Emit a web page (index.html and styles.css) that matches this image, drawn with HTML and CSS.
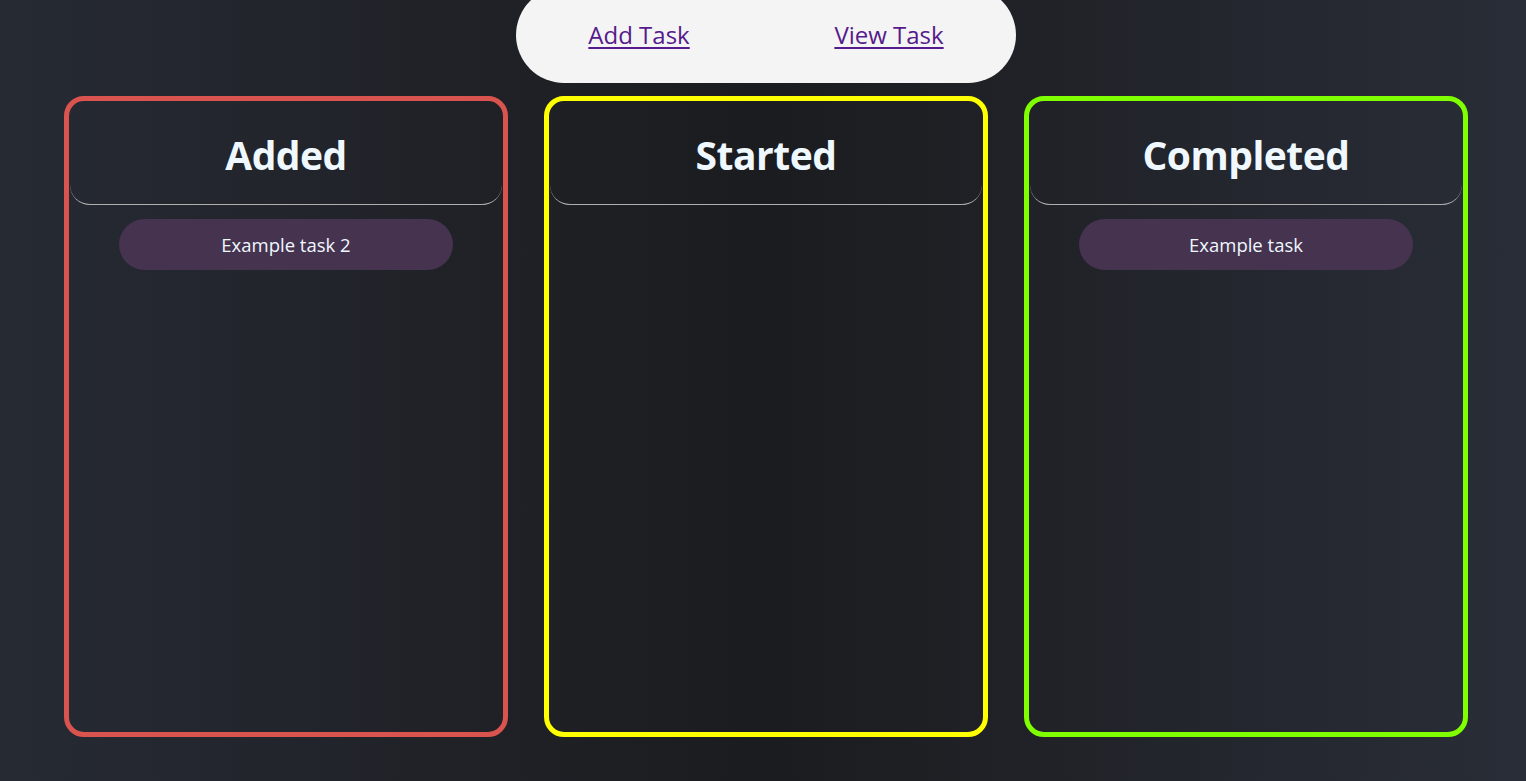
FILE: index.html
```html
<!DOCTYPE html>
<html lang="en">
<head>
<meta charset="utf-8">
<title>Tasks</title>
<link rel="stylesheet" href="styles.css">
</head>
<body>
<div class="page">
  <nav class="nav">
    <a class="nav-link" href="#add">Add Task</a>
    <a class="nav-link" href="#view">View Task</a>
  </nav>
  <main class="board">
    <section class="column column-added">
      <header class="column-head"><h2 class="column-title">Added</h2></header>
      <div class="task">Example task 2</div>
    </section>
    <section class="column column-started">
      <header class="column-head"><h2 class="column-title">Started</h2></header>
    </section>
    <section class="column column-completed">
      <header class="column-head"><h2 class="column-title">Completed</h2></header>
      <div class="task">Example task</div>
    </section>
  </main>
</div>
</body>
</html>
```
FILE: styles.css
```css
html, body {
  margin: 0;
  padding: 0;
  height: 100%;
}
body {
  background: linear-gradient(to right, #262a33 0%, #1b1c1f 50%, #292d37 100%);
  font-family: "Open Sans", "Noto Sans", sans-serif;
  color: #f0f8ff;
  overflow: hidden;
}
.page {
  padding-left: 6px;
  display: flex;
  flex-direction: column;
  align-items: center;
}
.nav {
  box-sizing: border-box;
  width: 500px;
  height: 96px;
  margin-top: -13px;
  padding-bottom: 2px;
  background: #f4f4f4;
  border-radius: 48px;
  display: flex;
  justify-content: space-around;
  align-items: center;
}
.nav-link {
  font-size: 24px;
  color: #551a8b;
  text-decoration: underline;
  text-underline-offset: 3px;
  text-decoration-thickness: 2px;
}
.board {
  margin-top: 13px;
  display: flex;
  gap: 36px;
}
.column {
  box-sizing: border-box;
  width: 444px;
  height: 641px;
  border: 5px solid #d9534f;
  border-radius: 20px;
  display: flex;
  flex-direction: column;
  align-items: center;
}
.column-started { border-color: #ffff00; }
.column-completed { border-color: #7fff00; }
.column-head {
  box-sizing: border-box;
  align-self: stretch;
  margin: 0 1px;
  height: 104px;
  border-bottom: 1px solid #b0b0b0;
  border-radius: 0 0 20px 20px;
  display: flex;
  align-items: center;
  justify-content: center;
  padding-top: 4px;
}
.column-title {
  margin: 0;
  font-size: 39px;
  font-weight: 700;
  color: #f0f8ff;
  letter-spacing: -0.5px;
}
.task {
  box-sizing: border-box;
  margin-top: 14px;
  width: 334px;
  height: 51px;
  border-radius: 26px;
  background: #45334f;
  display: flex;
  align-items: center;
  justify-content: center;
  font-size: 18.5px;
  color: #f0f8ff;
}
```
